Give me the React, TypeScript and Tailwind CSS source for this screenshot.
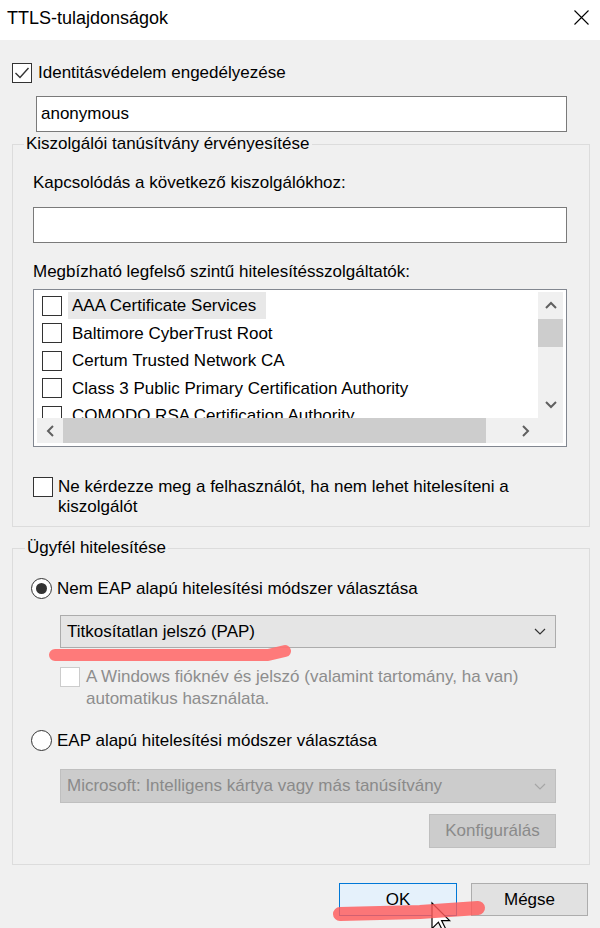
import React from 'react';

const Check = ({checked = false, disabled = false}: {checked?: boolean; disabled?: boolean}) => (
    <div className={`w-[20px] h-[20px] shrink-0 bg-white border ${disabled ? 'border-[#cccccc]' : 'border-[#333333]'}`}>
        {checked && (
            <svg width="18" height="18" viewBox="0 0 18 18">
                <polyline points="2.5,9 7,13.5 15.5,4" fill="none" stroke="#333" strokeWidth="1.4"/>
            </svg>
        )}
    </div>
);

const Radio = ({on = false}: {on?: boolean}) => (
    <div className="w-[21px] h-[21px] shrink-0 rounded-full bg-white border border-[#333333] flex items-center justify-center">
        {on && <div className="w-[11px] h-[11px] rounded-full bg-[#333333]"/>}
    </div>
);

const Chevron = ({dir, color = '#606060', w = 2}: {dir: 'up' | 'down' | 'left' | 'right'; color?: string; w?: number}) => {
    const pts = {
        up: '1,7 6,2 11,7',
        down: '1,2 6,7 11,2',
        left: '7,1 2,6 7,11',
        right: '2,1 7,6 2,11',
    }[dir];
    const box = dir === 'up' || dir === 'down' ? {width: 12, height: 9} : {width: 9, height: 12};
    return (
        <svg width={box.width} height={box.height} viewBox={`0 0 ${box.width} ${box.height}`}>
            <polyline points={pts} fill="none" stroke={color} strokeWidth={w}/>
        </svg>
    );
};

const certs = [
    'AAA Certificate Services',
    'Baltimore CyberTrust Root',
    'Certum Trusted Network CA',
    'Class 3 Public Primary Certification Authority',
    'COMODO RSA Certification Authority',
];

export default function App() {
    return (
        <div className="relative w-[600px] h-[928px] overflow-hidden bg-[#f0f0f0] text-black text-[17px] font-['Liberation_Sans',Arial,sans-serif]">
            {/* title bar */}
            <div className="h-[40px] bg-white flex items-center justify-between pl-[7px] pr-[11px]">
                <span className="text-[18px] leading-[22px] -mt-[5px]">TTLS-tulajdonságok</span>
                <svg width="15" height="15" viewBox="0 0 15 15" className="-mt-[6px]">
                    <path d="M0.5 0.5 L14.5 14.5 M14.5 0.5 L0.5 14.5" stroke="#000" strokeWidth="1.1"/>
                </svg>
            </div>

            <div className="pl-[12px] pr-[10px] pt-[23px]">
                <div className="flex items-center gap-[6px] h-[20px]">
                    <Check checked/>
                    <span className="leading-[20px]">Identitásvédelem engedélyezése</span>
                </div>

                <div className="mt-[13px] ml-[24px] w-[531px] h-[36px] bg-white border border-[#7a7a7a] flex items-center pl-[4px]">
                    anonymous
                </div>

                <fieldset className="mt-[2px] min-w-0 border border-[#dcdcdc]">
                    <legend className="ml-[11px] px-[2px] leading-[20px]">Kiszolgálói tanúsítvány érvényesítése</legend>
                    <div className="pl-[20px] pr-[22px] pb-[9px]">
                        <div className="mt-[19px] leading-[20px]">Kapcsolódás a következő kiszolgálókhoz:</div>
                        <div className="mt-[14px] h-[36px] bg-white border border-[#7a7a7a]"/>
                        <div className="mt-[19px] leading-[20px]">Megbízható legfelső szintű hitelesítésszolgáltatók:</div>

                        <div className="mt-[7px] h-[158px] bg-white border border-[#828790] pt-[2px] px-[3px] pb-[3px]">
                            <div className="grid grid-cols-[501px_25px] grid-rows-[126px_25px] h-full">
                                <div className="overflow-hidden">
                                    {certs.map((c, i) => (
                                        <div key={c} className="h-[27.5px] flex items-center pl-[5px] whitespace-nowrap">
                                            <Check/>
                                            <span className={`ml-[6px] pl-[4px] pr-[10px] leading-[27px] ${i === 0 ? 'bg-[#e8e8e8]' : ''}`}>{c}</span>
                                        </div>
                                    ))}
                                </div>
                                <div className="bg-[#f0f0f0] flex flex-col">
                                    <div className="h-[27px] flex items-center justify-center"><Chevron dir="up"/></div>
                                    <div className="h-[28px] bg-[#cdcdcd]"/>
                                    <div className="flex-1"/>
                                    <div className="h-[27px] flex items-center justify-center"><Chevron dir="down"/></div>
                                </div>
                                <div className="bg-[#f0f0f0] flex">
                                    <div className="w-[26px] flex items-center justify-center"><Chevron dir="left"/></div>
                                    <div className="w-[423px] bg-[#cdcdcd]"/>
                                    <div className="flex-1"/>
                                    <div className="w-[26px] flex items-center justify-center"><Chevron dir="right"/></div>
                                </div>
                                <div className="bg-[#f0f0f0]"/>
                            </div>
                        </div>

                        <div className="mt-[30px] flex items-start gap-[5px]">
                            <Check/>
                            <span className="leading-[20px] w-[470px]">Ne kérdezze meg a felhasználót, ha nem lehet hitelesíteni a kiszolgálót</span>
                        </div>
                    </div>
                </fieldset>

                <fieldset className="mt-[11px] min-w-0 border border-[#dcdcdc]">
                    <legend className="ml-[12px] px-[2px] leading-[20px]">Ügyfél hitelesítése</legend>
                    <div className="pl-[18px] pb-[16px]">
                        <div className="mt-[20px] flex items-center gap-[5px] h-[21px]">
                            <Radio on/>
                            <span>Nem EAP alapú hitelesítési módszer választása</span>
                        </div>
                        <div className="mt-[16px] ml-[29px] w-[496px] h-[33px] bg-[#e5e5e5] border border-[#acacac] flex items-center justify-between pl-[6px] pr-[9px]">
                            <span>Titkosítatlan jelszó (PAP)</span>
                            <Chevron dir="down" color="#333" w={1.2}/>
                        </div>
                        <div className="mt-[18px] ml-[29px] flex items-start gap-[6px] text-[#8d8d8d]">
                            <div className="mt-[1px]"><Check disabled/></div>
                            <span className="leading-[22px] w-[450px]">A Windows fióknév és jelszó (valamint tartomány, ha van) automatikus használata.</span>
                        </div>
                        <div className="mt-[20px] flex items-center gap-[5px] h-[21px]">
                            <Radio/>
                            <span>EAP alapú hitelesítési módszer választása</span>
                        </div>
                        <div className="mt-[18px] ml-[29px] w-[496px] h-[34px] bg-[#cccccc] border border-[#bfbfbf] flex items-center justify-between pl-[6px] pr-[9px] text-[#8a8a8a]">
                            <span>Microsoft: Intelligens kártya vagy más tanúsítvány</span>
                            <Chevron dir="down" color="#a6a6a6" w={1.2}/>
                        </div>
                        <div className="mt-[11px] ml-[29px] w-[496px] flex justify-end">
                            <div className="w-[127px] h-[34px] bg-[#cccccc] border border-[#bfbfbf] flex items-center justify-center text-[#8a8a8a]">
                                Konfigurálás
                            </div>
                        </div>
                    </div>
                </fieldset>

                <div className="mt-[18px] flex justify-end gap-[14px] pr-[2px]">
                    <button className="w-[118px] h-[33px] bg-[#e5f1fb] border border-[#0078d7]">OK</button>
                    <button className="w-[117px] h-[33px] bg-[#e1e1e1] border border-[#adadad]">Mégse</button>
                </div>
            </div>

            {/* annotations drawn over the screenshot: pointer and red marker strokes */}
            <svg className="absolute inset-0 pointer-events-none" width="600" height="928" viewBox="0 0 600 928">
                <path d="M432 903 L432 928.6 L438.4 922.2 L443.2 931.8 L446.4 930.2 L441.6 920.6 L449.6 920.6 Z"
                      fill="#fff" stroke="#000" strokeWidth="1.2" strokeLinejoin="miter"/>
                <path d="M55 655 L268 655 L285 651" fill="none" stroke="#ff7070" strokeOpacity="0.92"
                      strokeWidth="12" strokeLinecap="round" strokeLinejoin="round"/>
                <path d="M340 914 L420 912 L478 908" fill="none" stroke="#ff5a5a" strokeOpacity="0.82"
                      strokeWidth="14" strokeLinecap="round" strokeLinejoin="round"/>
            </svg>
        </div>
    );
}
